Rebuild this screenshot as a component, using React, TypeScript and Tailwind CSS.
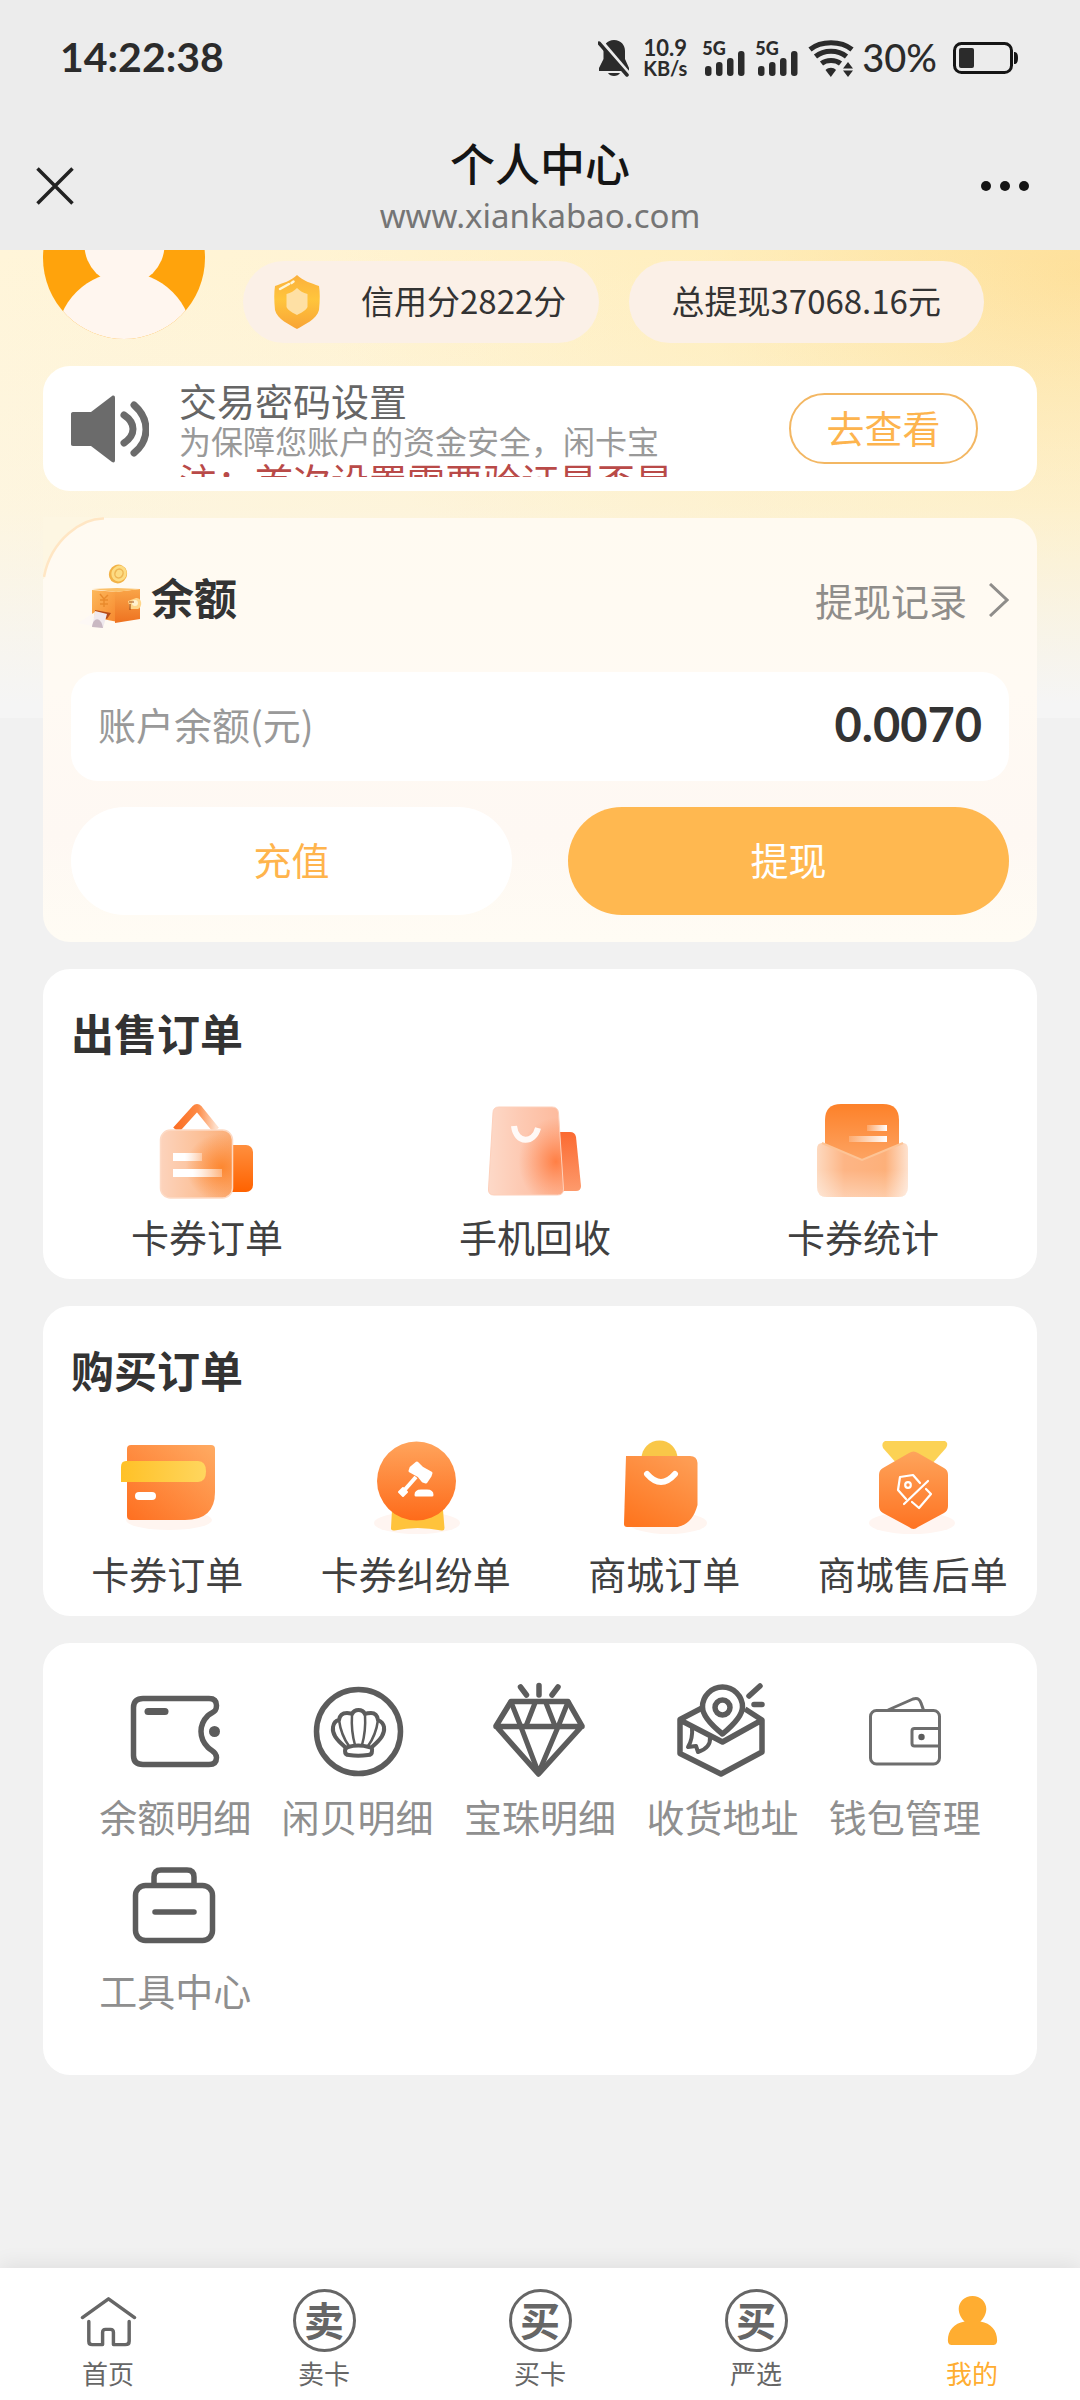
import type { ReactNode } from "react";

const CJK = "font-['Noto_Sans_CJK_SC',sans-serif]";

/* ---------- status bar ---------- */

function BellOff() {
  return (
    <svg viewBox="0 0 32 38" className="h-[38px] w-8" aria-hidden="true">
      <path d="M16 1C9 1 5.500 6 5.500 12v8L1 29v3h30v-3l-4-9v-8C27 6 23 1 16 1Z" fill="#2b2b2b" />
      <path d="M10 34h12c-2 4-10 4-12 0Z" fill="#2b2b2b" />
      <path d="M3 2l29 34" stroke="#ececec" strokeWidth="4" />
      <path d="M1 4l28 32" stroke="#2b2b2b" strokeWidth="3.500" strokeLinecap="round" />
    </svg>
  );
}

function Signal() {
  return (
    <div className="relative h-9 w-[43px]">
      <span className="absolute left-0 top-0 font-['Lato',sans-serif] text-[18px] font-black leading-4 text-[#2b2b2b]">5G</span>
      <svg viewBox="0 0 43 36" className="h-9 w-[43px]" fill="#2b2b2b" aria-hidden="true">
        <rect x="3" y="26" width="6.500" height="10" rx="3" />
        <rect x="14" y="22" width="6.500" height="14" rx="3" />
        <rect x="25" y="18" width="6.500" height="18" rx="3" />
        <rect x="36" y="11" width="6.500" height="25" rx="3" />
      </svg>
    </div>
  );
}

function Wifi() {
  return (
    <svg viewBox="0 0 46 38" className="h-[38px] w-[46px]" aria-hidden="true">
      <g fill="none" stroke="#2b2b2b" strokeWidth="5">
        <path d="M2 10.500C13 1.500 33 1.500 44 10.500" />
        <path d="M7.500 17.500C16 10.500 30 10.500 38.500 17.500" />
        <path d="M13.500 24.500C18.500 20.500 27.500 20.500 32.500 24.500" />
      </g>
      <path d="M17.500 31c3-3 8-3 10.500 0l-5.200 7z" fill="#2b2b2b" />
      <path d="M40 23l5 6.500H35zM40 38l5-6.500H35z" fill="#2b2b2b" />
    </svg>
  );
}

function Battery() {
  return (
    <svg viewBox="0 0 65 34" className="h-[34px] w-[65px]" aria-hidden="true">
      <rect x="1.500" y="2.500" width="57" height="29" rx="7" fill="none" stroke="#151515" strokeWidth="3" />
      <rect x="6" y="7" width="15" height="20" rx="2" fill="#2b2b2b" />
      <path d="M61 11c3 0 4 2 4 6s-1 6-4 6z" fill="#151515" />
    </svg>
  );
}

/* ---------- profile ---------- */

function Avatar() {
  return (
    <svg viewBox="0 0 162 162" className="size-[162px] shrink-0" role="img" aria-label="头像">
      <clipPath id="avatarClip">
        <circle cx="81" cy="81" r="81" />
      </clipPath>
      <g clipPath="url(#avatarClip)">
        <rect width="162" height="162" fill="#ffa30c" />
        <circle cx="81.500" cy="68" r="40" fill="#fff6ef" />
        <circle cx="81.500" cy="163" r="68" fill="#fff6ef" />
      </g>
    </svg>
  );
}

function Shield() {
  return (
    <svg viewBox="0 0 46 54" className="h-[54px] w-[46px]" aria-hidden="true">
      <defs>
        <linearGradient id="shieldFill" x1="0" y1="0" x2="0" y2="1">
          <stop offset="0" stopColor="#fbb03c" />
          <stop offset=".45" stopColor="#ffc53c" />
          <stop offset="1" stopColor="#f8a436" />
        </linearGradient>
      </defs>
      <path d="M23 0C29 6 37 8 45 11c1 6 1 14 0 24-2 9-15 15-22 19C16 50 3 44 1 35 0 25 0 17 1 11 9 8 17 6 23 0Z" fill="url(#shieldFill)" />
      <path d="M23 13c3 3 6 5 10.500 6v13c-2 4-7 6-10.500 8-3.500-2-8.500-4-10.500-8V19C17 18 20 16 23 13Z" fill="#fee0a4" />
      <path d="M6 14l9-5M17.500 8l2-1.500" stroke="#fff6d8" strokeWidth="2.500" strokeLinecap="round" />
    </svg>
  );
}

function Speaker() {
  return (
    <svg viewBox="0 0 78 68" className="h-[68px] w-[78px]" aria-hidden="true">
      <path d="M2 17h18L41 1c1.500-1 3-.5 3 2v62c0 2.500-1.500 3-3 2L20 51H2c-1.500 0-2-1-2-2V19c0-1 .5-2 2-2Z" fill="#6b6b6b" />
      <path d="M53 20c12 8 12 20 0 28M63 10c16 14 16 35 0 48" fill="none" stroke="#6b6b6b" strokeWidth="7" strokeLinecap="round" />
    </svg>
  );
}

function BalanceWallet() {
  return (
    <svg viewBox="0 0 68 64" className="h-16 w-[68px]" aria-hidden="true">
      <defs>
        <linearGradient id="bwSide" x1="0" y1="0" x2="0" y2="1">
          <stop offset="0" stopColor="#f9a548" />
          <stop offset="1" stopColor="#ee7220" />
        </linearGradient>
        <linearGradient id="bwFront" x1="0" y1="0" x2="1" y2="1">
          <stop offset="0" stopColor="#fdb95b" />
          <stop offset="1" stopColor="#f6862c" />
        </linearGradient>
      </defs>
      <path d="M17 26l26 2v30l-26-5z" fill="url(#bwFront)" />
      <path d="M40 28l25-3v30l-25 4z" fill="url(#bwSide)" />
      <path d="M17 25l25-1 23 1-24 3z" fill="#fbc069" />
      <path d="M25 30l4 5 4-4M29 35v8M25 36h8M25 40h8" fill="none" stroke="#e98a2c" strokeWidth="1.500" />
      <path d="M53 37l8-3c6-1 7 9 2 11l-8 0z" fill="#ffd68b" />
      <circle cx="60" cy="39" r="3" fill="#fff1cf" />
      <path d="M54 38h5M55 40v6" stroke="#a4501c" strokeWidth="1.200" />
      <path d="M20 46l16 3-4 6-12-4z" fill="#b64b17" />
      <path d="M20 47l12 3-4 14-11-2z" fill="#f0e9ee" />
      <path d="M20 48l-3 14-14-3z" fill="#fdf8f5" />
      <path d="M17 63c1-10 9-11 11 1z" fill="#c9b8c2" />
      <ellipse cx="43" cy="10" rx="9" ry="9.500" transform="rotate(25 43 10)" fill="#f2b247" />
      <ellipse cx="44" cy="9.500" rx="7.500" ry="8" transform="rotate(25 44 9.500)" fill="#fddc83" />
      <ellipse cx="44" cy="9.500" rx="4" ry="4.500" transform="rotate(25 44 9.500)" fill="none" stroke="#efb654" strokeWidth="1.500" />
    </svg>
  );
}

/* ---------- order icons ---------- */

function Glyph({ children }: { children: ReactNode }) {
  return (
    <svg viewBox="0 0 96 96" className="size-24 overflow-visible" aria-hidden="true">
      {children}
    </svg>
  );
}

const sellHang = (
  <Glyph>
    <defs>
      <linearGradient id="shBack" x1="0" y1="0" x2="0" y2="1">
        <stop offset="0" stopColor="#ff8f3e" />
        <stop offset="1" stopColor="#ff6200" />
      </linearGradient>
      <linearGradient id="shStrap" x1="0" y1="0" x2="1" y2="0">
        <stop offset="0" stopColor="#fb6f25" />
        <stop offset=".55" stopColor="#fd8a45" />
        <stop offset="1" stopColor="#fee0cc" />
      </linearGradient>
      <linearGradient id="shBody" x1="0" y1="0" x2="1" y2="0">
        <stop offset="0" stopColor="#fcd3bc" />
        <stop offset=".5" stopColor="#fcc29b" />
        <stop offset="1" stopColor="#fbad76" />
      </linearGradient>
      <radialGradient id="shGlow" cx=".85" cy=".55" r=".5">
        <stop offset="0" stopColor="#fd8730" />
        <stop offset="1" stopColor="#fd8730" stopOpacity="0" />
      </radialGradient>
      <linearGradient id="shLine" x1="0" y1="0" x2="1" y2="0">
        <stop offset=".4" stopColor="#fff" />
        <stop offset="1" stopColor="#fff" stopOpacity=".35" />
      </linearGradient>
    </defs>
    <path d="M17 27L36 6q2-2 4 0l17 21" fill="none" stroke="url(#shStrap)" strokeWidth="7.500" strokeLinejoin="round" />
    <rect x="60" y="42" width="34" height="47" rx="7" fill="url(#shBack)" />
    <rect x="1.500" y="27" width="72" height="68" rx="10" fill="url(#shBody)" />
    <rect x="1.500" y="27" width="72" height="68" rx="10" fill="url(#shGlow)" stroke="#fddac5" strokeWidth="1.500" />
    <rect x="14" y="50" width="29" height="8" fill="url(#shLine)" />
    <rect x="14" y="66" width="49" height="8" fill="url(#shLine)" />
  </Glyph>
);

const sellPhone = (
  <Glyph>
    <defs>
      <linearGradient id="spBody" x1="0" y1="0" x2="1" y2="0">
        <stop offset="0" stopColor="#fdd9c8" />
        <stop offset=".45" stopColor="#fdc9b2" />
        <stop offset="1" stopColor="#fdb99b" />
      </linearGradient>
      <radialGradient id="spGlow" cx=".9" cy=".62" r=".5">
        <stop offset="0" stopColor="#ff7f45" />
        <stop offset="1" stopColor="#ff8f5c" stopOpacity="0" />
      </radialGradient>
      <linearGradient id="spBack" x1="0" y1="0" x2="0" y2="1">
        <stop offset="0" stopColor="#fb6a31" />
        <stop offset="1" stopColor="#fd9a6c" />
      </linearGradient>
    </defs>
    <path d="M70 29h13q5 0 6 5l5 49q0 5-5 5H70z" fill="url(#spBack)" />
    <path d="M12 4h53q6 0 6.500 6l5 76q0 6-6 6H7q-6 0-5.500-6L6 10q0-6 6-6Z" fill="url(#spBody)" />
    <path d="M12 4h53q6 0 6.500 6l5 76q0 6-6 6H7q-6 0-5.500-6L6 10q0-6 6-6Z" fill="url(#spGlow)" stroke="#fdd0bb" />
    <path d="M27 23c2 18 20 18 24 2" fill="none" stroke="#fff" strokeWidth="6" strokeOpacity=".9" />
  </Glyph>
);

const sellStats = (
  <Glyph>
    <defs>
      <linearGradient id="ssCard" x1="0" y1="0" x2="0" y2="1">
        <stop offset="0" stopColor="#fd8129" />
        <stop offset="1" stopColor="#fda565" />
      </linearGradient>
      <linearGradient id="ssBody" x1="0" y1="0" x2="1" y2="0">
        <stop offset="0" stopColor="#fdd9bf" />
        <stop offset=".3" stopColor="#fdb585" />
        <stop offset=".75" stopColor="#fdb07a" />
        <stop offset="1" stopColor="#fee2cf" />
      </linearGradient>
      <linearGradient id="ssFade" x1="0" y1="0" x2="0" y2="1">
        <stop offset=".5" stopColor="#fff" stopOpacity="0" />
        <stop offset="1" stopColor="#fff" stopOpacity=".35" />
      </linearGradient>
      <linearGradient id="ssLine" x1="0" y1="0" x2="1" y2="0">
        <stop offset="0" stopColor="#fff" stopOpacity=".2" />
        <stop offset="1" stopColor="#fff" />
      </linearGradient>
    </defs>
    <path d="M26 1h42q16 0 16 16v42H10V17Q10 1 26 1Z" fill="url(#ssCard)" />
    <path d="M7 40l40 17 41-17q5 0 5 6v38q0 10-10 10H12Q2 94 2 84V46q0-6 5-6Z" fill="url(#ssBody)" />
    <path d="M7 40l40 17 41-17q5 0 5 6v38q0 10-10 10H12Q2 94 2 84V46q0-6 5-6Z" fill="url(#ssFade)" />
    <path d="M7 40l40 17 41-17" fill="none" stroke="#fdc496" strokeWidth="2" />
    <rect x="52" y="22" width="20" height="6" fill="url(#ssLine)" />
    <rect x="34" y="33" width="38" height="6" fill="url(#ssLine)" />
  </Glyph>
);

const buyCard = (
  <Glyph>
    <defs>
      <linearGradient id="bcBody" x1="1" y1="0" x2="0" y2="1">
        <stop offset="0" stopColor="#ffab63" />
        <stop offset="1" stopColor="#fe6f20" />
      </linearGradient>
      <linearGradient id="bcBand" x1="0" y1="0" x2="1" y2="0">
        <stop offset="0" stopColor="#ffc127" />
        <stop offset="1" stopColor="#ffd65e" />
      </linearGradient>
    </defs>
    <ellipse cx="50" cy="80" rx="43" ry="10" fill="#fff5f0" />
    <path d="M12 5h80q4 0 4 4v43q0 28-30 28H12q-4 0-4-4V9q0-4 4-4Z" fill="url(#bcBody)" />
    <path d="M7 21h72q8 0 8 10.500T79 42H2V27q0-6 5-6Z" fill="url(#bcBand)" />
    <rect x="16" y="52" width="21" height="8" rx="4" fill="#fff" />
  </Glyph>
);

const buyDispute = (
  <Glyph>
    <defs>
      <linearGradient id="bdDisc" x1="0" y1="0" x2="0" y2="1">
        <stop offset="0" stopColor="#ffa45c" />
        <stop offset="1" stopColor="#fe6b1a" />
      </linearGradient>
    </defs>
    <ellipse cx="49" cy="83" rx="43" ry="11" fill="#fff5f1" />
    <path d="M24 70h51l1.500 18q0 3-3 2.500-24-5-47 0-4 .5-3.500-2.500Z" fill="#ffc33b" />
    <circle cx="48.500" cy="41" r="39.500" fill="url(#bdDisc)" />
    <g fill="#fff" stroke="#fff" strokeLinejoin="round">
      <path d="M49 23l5 5 9 5-1 3-4 6-3-1-4-5-9-5 1-3z" strokeWidth="3" />
      <path d="M48 37L33 54" strokeWidth="4" />
      <path d="M35 48l4 4-4 4-4-4z" strokeWidth="2" />
      <path d="M48 55q0-4 5-4h6q5 0 5 4z" strokeWidth="3" />
    </g>
  </Glyph>
);

const buyMall = (
  <Glyph>
    <defs>
      <linearGradient id="bmBody" x1=".8" y1="0" x2=".2" y2="1">
        <stop offset="0" stopColor="#fe9d54" />
        <stop offset="1" stopColor="#fe7620" />
      </linearGradient>
    </defs>
    <ellipse cx="52" cy="83" rx="39" ry="11" fill="#fff5f0" />
    <circle cx="43.500" cy="18.500" r="18" fill="#f9c748" />
    <path d="M10 16h64q7 0 7.500 7v42q-5 19-20 22H11q-3 0-3-3Z" fill="url(#bmBody)" />
    <path d="M31 34q14 16 28 0" fill="none" stroke="#fff" strokeWidth="6" strokeLinecap="round" />
  </Glyph>
);

const buyAfterSale = (
  <Glyph>
    <defs>
      <linearGradient id="baHex" x1="0" y1="0" x2="0" y2="1">
        <stop offset="0" stopColor="#fea45b" />
        <stop offset="1" stopColor="#fe7322" />
      </linearGradient>
    </defs>
    <ellipse cx="47" cy="83" rx="43" ry="11" fill="#fff5f1" />
    <path d="M20 1h60q4 2 1 7L66 25H33L18 8q-2-5 2-7Z" fill="#fcd254" />
    <path d="M44 13q4.500-3 9 0l26 15q4 2 4 7v31q0 5-4 7L53 87q-4.500 4-9 0L18 73q-4-2-4-7V35q0-5 4-7Z" fill="url(#baHex)" />
    <g fill="none" stroke="#fff" strokeWidth="2.200" strokeLinecap="round" strokeLinejoin="round">
      <path d="M55 43l-7-8-13 2-2 13 8 9M61 49l5 5-12 14-7-6M63 41L39 64" />
      <circle cx="43" cy="45" r="2.800" />
    </g>
  </Glyph>
);

/* ---------- tool icons ---------- */

const toolBalance = (
  <Glyph>
    <g fill="none" stroke="#5c5c5c" strokeWidth="5.500" strokeLinecap="round" strokeLinejoin="round">
      <path d="M16 15.500h66q7.500 0 7.500 7c0 7-4 6-8.500 10q-7 7-7 16t7 16c4 4 8.500 4 8.500 10q0 7-7.500 7H16q-9.500 0-9.500-9V24.500q0-9 9.500-9Z" />
      <path d="M21 28.500h17" strokeWidth="7" />
    </g>
    <circle cx="87.500" cy="48.500" r="5.500" fill="#5c5c5c" />
  </Glyph>
);

const toolShell = (
  <Glyph>
    <g fill="none" stroke="#5c5c5c" strokeLinecap="round" strokeLinejoin="round">
      <circle cx="48.500" cy="48.500" r="42" strokeWidth="5.500" />
      <path d="M35 64C26 56 22 51 23 44q1-6 6-7 1-7 8-7 4 0 5 1 2-4 6.500-4t6.500 4q2-1 6-1 6 0 7 7 5 2 6 7c1 7-3 12-12 20" strokeWidth="4" />
      <path d="M29 37q2 15 10 26M68 37q-2 15-10 26" strokeWidth="2.500" />
      <path d="M42 32q-1 16 3 30M55 32q1 16-3 30" strokeWidth="2.500" />
      <path d="M38 64q10-3 21 0 4 1 3 4 0 4-4 4-10 1.500-19 0-4 0-4-4 0-3 3-4Z" strokeWidth="4" />
    </g>
  </Glyph>
);

const toolDiamond = (
  <Glyph>
    <g fill="none" stroke="#5c5c5c" strokeWidth="5.500" strokeLinecap="round" strokeLinejoin="round">
      <path d="M19 18.500h57L90 43 46.500 91 4 43ZM4 43.500h86" />
      <path d="M19 19l10 25 17.500 46L66 44l10-25M43 20l-9 23M54 20l9 23" strokeWidth="5" />
      <path d="M28.500 4l6 8M47 2.500V12M66 4l-6 8" />
    </g>
  </Glyph>
);

const toolAddress = (
  <Glyph>
    <g fill="none" stroke="#5c5c5c" strokeWidth="5.500" strokeLinejoin="round">
      <path d="M28 25L6 36.500v34L47 91l41-22V37L71 26M6 37l42.500 22L88 37" />
      <path d="M48.500 51C36 41 28.500 32 28.500 24a20 20 0 0 1 40 0c0 8-8 17-20 27Z" fill="#fff" />
      <circle cx="48.500" cy="24.500" r="7.500" />
      <path d="M18 44q1 12-4 20l8-1 2 6q13-4 12-15" strokeWidth="4" />
      <path d="M75 13L86 3M80 21.500h8" strokeLinecap="round" />
    </g>
  </Glyph>
);

const toolWallet = (
  <Glyph>
    <g fill="none" stroke="#6e6e6e" strokeWidth="3" strokeLinejoin="round">
      <rect x="13.500" y="27.500" width="69" height="53.500" rx="6" />
      <path d="M82.500 45.500h-25q-2.500 0-2.500 2.500v12.500q0 2.500 2.500 2.500h25M31 27l25-11q6-2 8 4l2.500 7" />
    </g>
    <circle cx="64.500" cy="54" r="3.200" fill="#5c5c5c" />
  </Glyph>
);

const toolBox = (
  <Glyph>
    <g fill="none" stroke="#5c5c5c" strokeWidth="5.500" strokeLinecap="round">
      <rect x="8.500" y="28.500" width="77" height="55" rx="10" />
      <path d="M27 28v-8q0-7 7-7h26q7 0 7 7v8M28 55h39" />
    </g>
  </Glyph>
);

/* ---------- shared parts ---------- */

type Item = { label: string; icon: ReactNode };

const sellItems: Item[] = [
  { label: "卡券订单", icon: sellHang },
  { label: "手机回收", icon: sellPhone },
  { label: "卡券统计", icon: sellStats },
];

const buyItems: Item[] = [
  { label: "卡券订单", icon: buyCard },
  { label: "卡券纠纷单", icon: buyDispute },
  { label: "商城订单", icon: buyMall },
  { label: "商城售后单", icon: buyAfterSale },
];

const toolItems: Item[] = [
  { label: "余额明细", icon: toolBalance },
  { label: "闲贝明细", icon: toolShell },
  { label: "宝珠明细", icon: toolDiamond },
  { label: "收货地址", icon: toolAddress },
  { label: "钱包管理", icon: toolWallet },
  { label: "工具中心", icon: toolBox },
];

function Entry({ label, icon }: Item) {
  return (
    <button type="button" className="flex flex-col items-center pb-0.5 text-[38px] leading-[46px] whitespace-nowrap">
      {icon}
      <span className="mt-3.5">{label}</span>
    </button>
  );
}

function OrderCard({ title, items, grid }: { title: string; items: Item[]; grid: string }) {
  return (
    <section className="rounded-[27px] bg-white pt-9 pb-[18px]">
      <h2 className="ml-7 text-[43px] leading-[54px] font-bold text-[#333]">{title}</h2>
      <div className={`mt-11 grid text-[#404040] ${grid}`}>
        {items.map((item) => (
          <Entry key={item.label} {...item} />
        ))}
      </div>
    </section>
  );
}

function CircleChar({ char }: { char: string }) {
  return (
    <span className="flex size-[63px] items-center justify-center rounded-full border-[3px] border-[#666] pb-1 text-[40px] leading-none font-bold text-[#666]">
      {char}
    </span>
  );
}

const navItems: (Item & { active?: boolean })[] = [
  {
    label: "首页",
    icon: (
      <svg viewBox="0 0 64 64" className="size-[63px]" fill="none" stroke="#666" strokeWidth="3.500" strokeLinecap="round" strokeLinejoin="round" aria-hidden="true">
        <path d="M5.500 29L32 10l26.500 19M12 33v20q0 3.500 3.500 3.500H26V44q0-3 3-3h5q3 0 3 3v12.500h12q4 0 4-3.500V33" />
      </svg>
    ),
  },
  { label: "卖卡", icon: <CircleChar char="卖" /> },
  { label: "买卡", icon: <CircleChar char="买" /> },
  { label: "严选", icon: <CircleChar char="买" /> },
  {
    label: "我的",
    active: true,
    icon: (
      <svg viewBox="0 0 64 64" className="size-[63px]" fill="#ffad31" aria-hidden="true">
        <path d="M32 7c8 0 14 6 14 13 0 6-3 10-6 13 11 2 17 9 17 19 0 3-1 5-5 5H12c-4 0-5-2-5-5 0-10 6-17 17-19-3-3-6-7-6-13 0-7 6-13 14-13Z" />
      </svg>
    ),
  },
];

export default function App() {
  return (
    <div className={`flex min-h-screen flex-col bg-[#f1f1f1] ${CJK}`}>
      <header className="relative z-10 h-[250px] bg-[#ececec]">
        <div className="flex h-[116px] items-center justify-between pr-[62px] pl-[60px] font-['Lato',sans-serif] text-[#2b2b2b]">
          <time className="pb-1 text-[41px] leading-none font-bold">14:22:38</time>
          <div className="flex items-center">
            <BellOff />
            <div className="ml-3 w-[46px] text-center text-[20px] leading-[21px] font-bold">
              <div className="text-[22px]">10.9</div>
              <div>KB/s</div>
            </div>
            <div className="ml-3.5">
              <Signal />
            </div>
            <div className="ml-2.5">
              <Signal />
            </div>
            <div className="ml-2.5">
              <Wifi />
            </div>
            <span className="ml-2 pb-0.5 text-[38px] leading-none font-medium">30%</span>
            <div className="ml-4">
              <Battery />
            </div>
          </div>
        </div>
        <div className="flex h-[134px] items-center justify-between px-9 pt-1.5">
          <button type="button" aria-label="关闭" className="w-[72px]">
            <svg viewBox="0 0 38 38" className="size-[38px]" stroke="#222" strokeWidth="3.500" aria-hidden="true">
              <path d="M1.500 1.500l35 35M36.500 1.500l-35 35" />
            </svg>
          </button>
          <div className="flex flex-col items-center">
            <h1 className="text-[45px] leading-[60px] font-medium text-[#151515]">个人中心</h1>
            <p className="font-['Noto_Sans',sans-serif] text-[33px] leading-[46px] text-[#757575]">www.xiankabao.com</p>
          </div>
          <button type="button" aria-label="更多" className="flex w-[72px] justify-end gap-[9px] pr-[15px]">
            <span className="size-2.5 shrink-0 rounded-full bg-[#151515]" />
            <span className="size-2.5 shrink-0 rounded-full bg-[#151515]" />
            <span className="size-2.5 shrink-0 rounded-full bg-[#151515]" />
          </button>
        </div>
      </header>

      <main className="relative flex-1 overflow-hidden px-[43px] pb-8">
        <div className="absolute inset-x-0 top-0 h-[468px] bg-[linear-gradient(to_bottom,rgba(245,245,245,0)_0%,rgba(250,246,236,0.35)_55%,#f5f5f5_97%),radial-gradient(ellipse_70%_105%_at_100%_5%,#fee09a_0%,rgba(255,236,180,0.6)_50%,rgba(255,243,208,0)_100%),linear-gradient(to_right,#fff5d9,#fff0c6)]" />
        <div className="relative">
          <div className="-mt-[73px] flex items-end gap-[38px] pr-[53px]">
            <Avatar />
            <div className="-mb-1 grid flex-1 grid-cols-2 gap-[30px] text-[33px] leading-[78px] text-[#333] whitespace-nowrap">
              <div className="flex h-[82px] items-start gap-[41px] rounded-full bg-[#fbf0e7] pt-[0px] pl-[31px]">
                <span className="pt-3.5">
                  <Shield />
                </span>
                <span>信用分2822分</span>
              </div>
              <div className="h-[82px] rounded-full bg-[#fbf0e7] text-center">总提现37068.16元</div>
            </div>
          </div>

          <section className="mt-[27px] flex h-[125px] items-center rounded-[27px] bg-white pr-[59px] pl-7">
            <Speaker />
            <div className="mb-1 ml-[30px] h-[100px] flex-1 overflow-hidden whitespace-nowrap">
              <p className="text-[38px] leading-[46px] text-[#666]">交易密码设置</p>
              <p className="text-[32px] leading-[34px] text-[#999]">为保障您账户的资金安全，闲卡宝</p>
              <p className="text-[38px] leading-[46px] text-[#b94a48]">注：首次设置需要验证是否是</p>
            </div>
            <button type="button" className="h-[71px] w-[189px] rounded-full border-2 border-[#f3b763] pb-1 text-[38px] leading-none text-[#fdb44e]">
              去查看
            </button>
          </section>

          <section className="relative mt-[27px] rounded-[27px] bg-[linear-gradient(to_bottom,#fffaf1,#fffaf3_40%,#fef8f3_75%,#fffcf4)] px-7 pt-9 pb-[27px]">
            <svg viewBox="0 0 64 64" className="absolute -top-px left-0 size-16" aria-hidden="true">
              <path d="M0 0h62v1C40 1 8 22 1 62H0Z" fill="#fdf6e2" />
              <path d="M61 1.500C40 1 8 22 1 60" fill="none" stroke="#ffe6c4" strokeWidth="2.500" />
            </svg>
            <div className="flex h-[92px] items-center justify-between">
              <div className="flex items-center gap-2 pb-2 pl-1">
                <BalanceWallet />
                <h2 className="text-[43px] leading-[54px] font-bold text-[#333]">余额</h2>
              </div>
              <a href="#records" className="flex items-center gap-[22px] text-[38px] leading-[46px] text-[#8f8d8a]">
                提现记录
                <svg viewBox="0 0 20 34" className="h-[34px] w-5" fill="none" stroke="#8f8d8a" strokeWidth="3" aria-hidden="true">
                  <path d="M1 1l17 16L1 33" />
                </svg>
              </a>
            </div>
            <div className="mt-[26px] flex h-[109px] items-center justify-between rounded-[27px] bg-white px-[27px] pb-1.5">
              <span className="text-[38px] leading-[46px] text-[#999]">账户余额(元)</span>
              <span className="font-['Lato',sans-serif] text-[47px] leading-[56px] font-bold text-[#333]">0.0070</span>
            </div>
            <div className="mt-[26px] grid grid-cols-2 gap-14 text-[38px] leading-[46px]">
              <button type="button" className="h-[108px] rounded-full bg-white pb-1 text-[#ffb44c]">充值</button>
              <button type="button" className="h-[108px] rounded-full bg-[#ffb850] pb-1 text-white">提现</button>
            </div>
          </section>

          <div className="mt-[27px] flex flex-col gap-[27px]">
            <OrderCard title="出售订单" items={sellItems} grid="grid-cols-[33%_33%_33%]" />
            <OrderCard title="购买订单" items={buyItems} grid="grid-cols-4" />
            <section className="grid grid-cols-5 gap-y-4 rounded-[27px] bg-white px-[41px] pt-10 pb-[60px] text-[#8f8f8f]">
              {toolItems.map((item) => (
                <Entry key={item.label} {...item} />
              ))}
            </section>
          </div>
        </div>
      </main>

      <nav className="relative grid h-[132px] grid-cols-5 bg-white shadow-[0_-3px_20px_rgba(0,0,0,0.08)]">
        {navItems.map(({ label, icon, active }) => (
          <a key={label} href="#tab" className={`flex flex-col items-center pt-[21px] text-[26px] leading-[34px] ${active ? "text-[#ffad31]" : "text-[#666]"}`}>
            {icon}
            <span className="mt-1">{label}</span>
          </a>
        ))}
      </nav>
    </div>
  );
}
